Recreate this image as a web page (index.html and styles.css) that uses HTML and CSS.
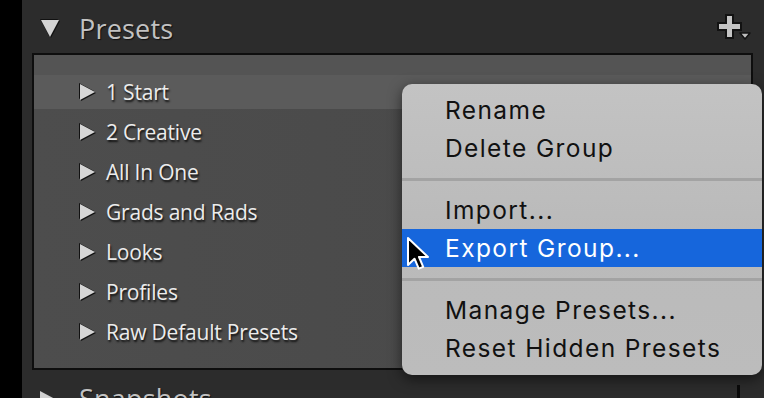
FILE: index.html
```html
<!DOCTYPE html>
<html lang="en">
<head>
    <meta charset="UTF-8">
    <title>Presets</title>
    <link rel="stylesheet" href="styles.css">
</head>
<body>
    <div class="sidebar">
        <div class="panel-header">
            <span class="tri-down"></span>
            <span class="panel-title">Presets</span>
            <svg class="add-icon" width="34" height="30" viewBox="0 0 34 30">
                <path d="M9 1h7v8h8v7h-8v8H9v-8H1V9h8z" fill="#c4c4c4" stroke="#121212" stroke-width="2" stroke-linejoin="miter"/>
                <path d="M23 19h10l-5 6z" fill="#bcbcbc" stroke="#121212" stroke-width="1.5" stroke-linejoin="round"/>
            </svg>
        </div>

        <div class="preset-box">
            <div class="box-top"></div>
            <ul class="group-list">
                <li class="group selected"><span class="tri-right"></span>1 Start</li>
                <li class="group"><span class="tri-right"></span>2 Creative</li>
                <li class="group"><span class="tri-right"></span>All In One</li>
                <li class="group"><span class="tri-right"></span>Grads and Rads</li>
                <li class="group"><span class="tri-right"></span>Looks</li>
                <li class="group"><span class="tri-right"></span>Profiles</li>
                <li class="group"><span class="tri-right"></span>Raw Default Presets</li>
            </ul>
        </div>

        <div class="panel-header next">
            <span class="tri-closed"></span>
            <span class="panel-title">Snapshots</span>
            <span class="edge-mark"></span>
        </div>
    </div>

    <div class="context-menu">
        <div class="menu-item">Rename</div>
        <div class="menu-item">Delete Group</div>
        <div class="menu-sep"></div>
        <div class="menu-item">Import...</div>
        <div class="menu-item active">Export Group...</div>
        <div class="menu-sep"></div>
        <div class="menu-item">Manage Presets...</div>
        <div class="menu-item">Reset Hidden Presets</div>
    </div>

    <svg class="cursor" width="24" height="36" viewBox="0 0 24 36">
        <path d="M2 2v27l6.5-6.3 4.3 10 4.4-1.9-4.2-9.8h9z" fill="#000" stroke="#fff" stroke-width="2" stroke-linejoin="round"/>
    </svg>
</body>
</html>
```

FILE: styles.css
```css
body {
    margin: 0;
    background-color: #000;
    width: 764px;
    height: 398px;
    overflow: hidden;
    position: relative;
    font-family: "Open Sans", "Liberation Sans", sans-serif;
}
.sidebar {
    margin-left: 22px;
    height: 398px;
    overflow: hidden;
    background-color: #2c2c2c;
    display: flex;
    flex-direction: column;
}
.panel-header {
    height: 53px;
    box-sizing: border-box;
    padding-top: 4px;
    display: flex;
    align-items: center;
    padding-left: 19px;
    padding-right: 14px;
    flex-shrink: 0;
}
.panel-title {
    font-size: 27px;
    color: #c2c2c2;
    margin-left: 20px;
    text-shadow: 1px 1px 1px #111;
    letter-spacing: 0.2px;
}
.tri-down {
    width: 0;
    height: 0;
    border-left: 9px solid transparent;
    border-right: 9px solid transparent;
    border-top: 17px solid #d4d4d4;
    filter: drop-shadow(1px 1px 0 #111) drop-shadow(-1px -1px 0 #111);
}
.add-icon {
    margin-left: auto;
    margin-top: 0;
    margin-right: -1px;
}
.preset-box {
    margin: 0 11px 0 10px;
    border: 2px solid #0e0e0e;
    background-color: #4b4b4b;
    background-image: linear-gradient(90deg, #4d4d4d, #484848);
    height: 313px;
    flex-shrink: 0;
}
.box-top {
    height: 20px;
    background-color: #545454;
}
.group-list {
    list-style: none;
    margin: 0;
    padding: 0;
    display: flex;
    flex-direction: column;
    gap: 6px;
}
.group {
    height: 34px;
    display: flex;
    align-items: center;
    padding-left: 46px;
    font-size: 21px;
    color: #ececec;
    text-shadow: 1px 2px 2px #111;
    letter-spacing: -0.2px;
    line-height: 30px;
}
.group.selected {
    background-color: #5b5b5b;
}
.tri-right {
    width: 0;
    height: 0;
    border-top: 8px solid transparent;
    border-bottom: 8px solid transparent;
    border-left: 15px solid #d6d6d6;
    margin-right: 11px;
    filter: drop-shadow(1px 1px 0 #111) drop-shadow(-1px -1px 0 #111);
}
.panel-header.next {
    margin-top: 7px;
    padding-top: 0;
    padding-left: 18px;
    align-items: flex-start;
}
.panel-header.next .panel-title {
    margin-left: 24px;
    margin-top: 2px;
    line-height: 40px;
}
.tri-closed {
    width: 0;
    height: 0;
    border-top: 8px solid transparent;
    border-bottom: 8px solid transparent;
    border-left: 15px solid #d0d0d0;
    margin-top: 14px;
}
.edge-mark {
    margin-left: auto;
    margin-right: 10px;
    margin-top: 8px;
    width: 3px;
    height: 20px;
    background-color: #0a0a0a;
}
.context-menu {
    position: absolute;
    left: 402px;
    top: 84px;
    width: 360px;
    padding: 7px 0 8px;
    background-color: #bdbdbd;
    background-image: linear-gradient(180deg, #c3c3c3 0%, #bababa 50%, #bcbcbc 100%);
    border-radius: 10px;
    box-shadow: 0 4px 14px rgba(0, 0, 0, 0.55);
    font-family: "Inter", "Liberation Sans", sans-serif;
}
.menu-item {
    height: 38px;
    line-height: 38px;
    padding-left: 43px;
    font-size: 24.5px;
    letter-spacing: 1.4px;
    color: #111;
}
.menu-item.active {
    background-color: #1666dc;
    color: #fff;
}
.menu-sep {
    height: 24px;
    display: flex;
    align-items: center;
}
.menu-sep::before {
    content: "";
    flex: 1;
    height: 3px;
    background-color: #a3a3a3;
}
.cursor {
    position: absolute;
    left: 406px;
    top: 236px;
}
```
